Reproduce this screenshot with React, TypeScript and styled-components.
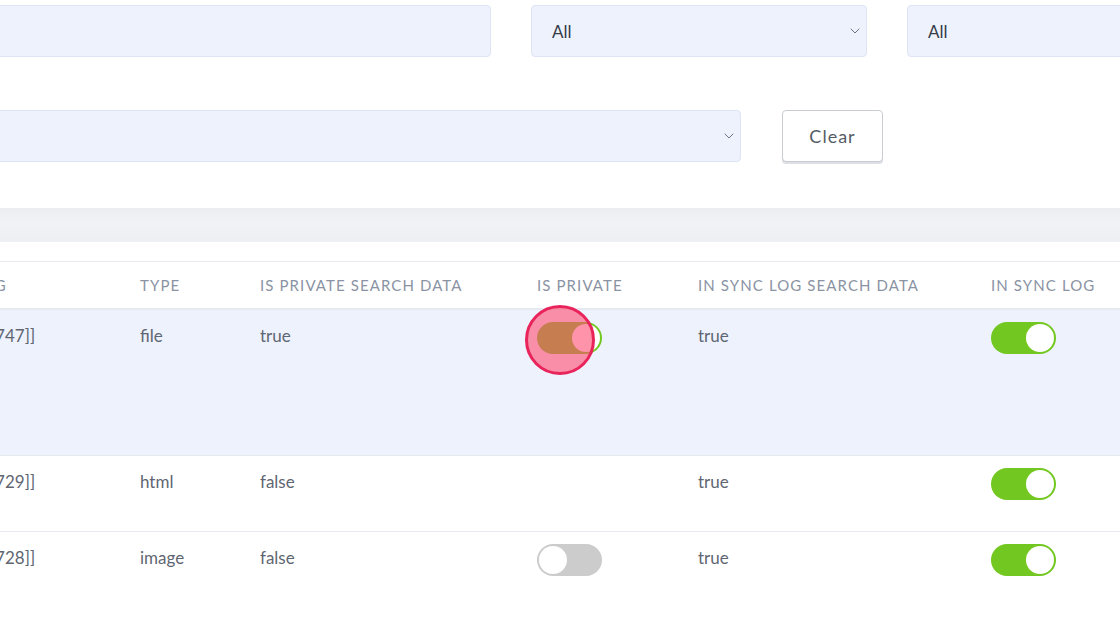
import React from "react";
import styled, { createGlobalStyle } from "styled-components";
import { ChevronDown } from "lucide-react";

const Global = createGlobalStyle`
  html, body { margin: 0; padding: 0; background: #ffffff; }
  body { font-family: Lato, "Noto Sans", "Liberation Sans", sans-serif; }
  * { box-sizing: border-box; }
`;

const Viewport = styled.div`
  width: 1120px;
  height: 626px;
  overflow: hidden;
  background: #ffffff;
`;

const Canvas = styled.div`
  margin-left: -300px;
  width: 1543px;
`;

const FilterRow = styled.div<{ $cols: string; $gap: number; $top: number }>`
  display: grid;
  grid-template-columns: ${(p) => p.$cols};
  column-gap: ${(p) => p.$gap}px;
  margin-top: ${(p) => p.$top}px;
  height: 52px;
`;

const Field = styled.div`
  display: flex;
  align-items: center;
  justify-content: space-between;
  padding: 0 3px 0 20px;
  background: #eef2fd;
  border: 1px solid #dde4f3;
  border-radius: 4px;
  color: #363d48;
  font-size: 17px;
`;

const Arrow = styled(ChevronDown)`
  color: #5a606b;
`;

const ClearButton = styled.button`
  height: 52px;
  background: #ffffff;
  border: 1px solid #c8ccd2;
  border-radius: 4px;
  box-shadow: 0 2px 0 #dcdfe3;
  color: #545c66;
  font-family: inherit;
  font-size: 18px;
  letter-spacing: 1px;
  cursor: pointer;
`;

const Band = styled.div`
  margin-top: 46px;
  height: 34px;
  background: linear-gradient(#ecedf1, #f1f2f5 40%, #eeeff3);
`;

const Table = styled.div`
  margin-top: 19px;
  border-top: 1px solid #e6e9ef;
`;

const cols = "265px 175px 120px 277px 161px 293px 1fr";

const HeadRow = styled.div`
  display: grid;
  grid-template-columns: ${cols};
  height: 48px;
  align-items: center;
  border-bottom: 2px solid #e6e9f0;
`;

const HeadCell = styled.div`
  color: #8a93a3;
  font-size: 15px;
  letter-spacing: 1.1px;
  text-transform: uppercase;
  white-space: nowrap;
`;

const Row = styled.div<{ $h: number; $active?: boolean }>`
  display: grid;
  grid-template-columns: ${cols};
  align-items: start;
  height: ${(p) => p.$h}px;
  padding-top: 12px;
  background: ${(p) => (p.$active ? "#eef2fd" : "#ffffff")};
  border-bottom: 1px solid #e6e9ee;
  &:last-child {
    border-bottom: none;
  }
`;

const Cell = styled.div<{ $text?: boolean }>`
  position: relative;
  height: 32px;
  display: flex;
  align-items: center;
  padding-bottom: ${(p) => (p.$text ? "6px" : "0")};
  color: #5f6672;
  font-size: 17px;
  white-space: nowrap;
`;

const Track = styled.span<{ $on: boolean }>`
  position: relative;
  display: inline-block;
  width: 65px;
  height: 32px;
  border-radius: 16px;
  background: ${(p) => (p.$on ? "#72c821" : "#cccccc")};
`;

const Knob = styled.span<{ $on: boolean }>`
  position: absolute;
  top: 2px;
  left: ${(p) => (p.$on ? "35px" : "2px")};
  width: 28px;
  height: 28px;
  border-radius: 50%;
  background: #ffffff;
`;

const Tap = styled.span`
  position: absolute;
  left: -12px;
  top: -17px;
  width: 70px;
  height: 70px;
  border-radius: 50%;
  background: rgba(255, 75, 112, 0.6);
  border: 3px solid #e8245a;
  pointer-events: none;
`;

const Toggle = ({ on }: { on: boolean }) => (
  <Track $on={on}>
    <Knob $on={on} />
  </Track>
);

type Item = {
  title: string;
  tag: string;
  type: string;
  privSearch: string;
  priv: boolean | null;
  syncSearch: string;
  sync: boolean;
  h: number;
  active?: boolean;
  tap?: boolean;
};

const items: Item[] = [
  { title: "Quarterly report", tag: "[[17747]]", type: "file", privSearch: "true", priv: true, syncSearch: "true", sync: true, h: 146, active: true, tap: true },
  { title: "Landing page", tag: "[[17729]]", type: "html", privSearch: "false", priv: null, syncSearch: "true", sync: true, h: 76 },
  { title: "Header image", tag: "[[17728]]", type: "image", privSearch: "false", priv: false, syncSearch: "true", sync: true, h: 76 },
];

export default function App() {
  return (
    <Viewport>
      <Global />
      <Canvas>
        <FilterRow $cols="1fr 336px 336px" $gap={40} $top={5}>
          <Field />
          <Field>
            All
            <Arrow size={16} strokeWidth={1.3} />
          </Field>
          <Field>
            All
            <Arrow size={16} strokeWidth={1.3} />
          </Field>
        </FilterRow>
        <FilterRow $cols="1041px 101px" $gap={41} $top={53}>
          <Field>
            <span />
            <Arrow size={16} strokeWidth={1.3} />
          </Field>
          <ClearButton>Clear</ClearButton>
        </FilterRow>
        <Band />
        <Table>
          <HeadRow>
            <HeadCell>Title</HeadCell>
            <HeadCell>Slug</HeadCell>
            <HeadCell>Type</HeadCell>
            <HeadCell>Is Private Search Data</HeadCell>
            <HeadCell>Is Private</HeadCell>
            <HeadCell>In Sync Log Search Data</HeadCell>
            <HeadCell>In Sync Log</HeadCell>
          </HeadRow>
          {items.map((it) => (
            <Row key={it.tag} $h={it.h} $active={it.active}>
              <Cell $text>{it.title}</Cell>
              <Cell $text>{it.tag}</Cell>
              <Cell $text>{it.type}</Cell>
              <Cell $text>{it.privSearch}</Cell>
              <Cell>
                {it.priv !== null && <Toggle on={it.priv} />}
                {it.tap && <Tap />}
              </Cell>
              <Cell $text>{it.syncSearch}</Cell>
              <Cell>
                <Toggle on={it.sync} />
              </Cell>
            </Row>
          ))}
        </Table>
      </Canvas>
    </Viewport>
  );
}
